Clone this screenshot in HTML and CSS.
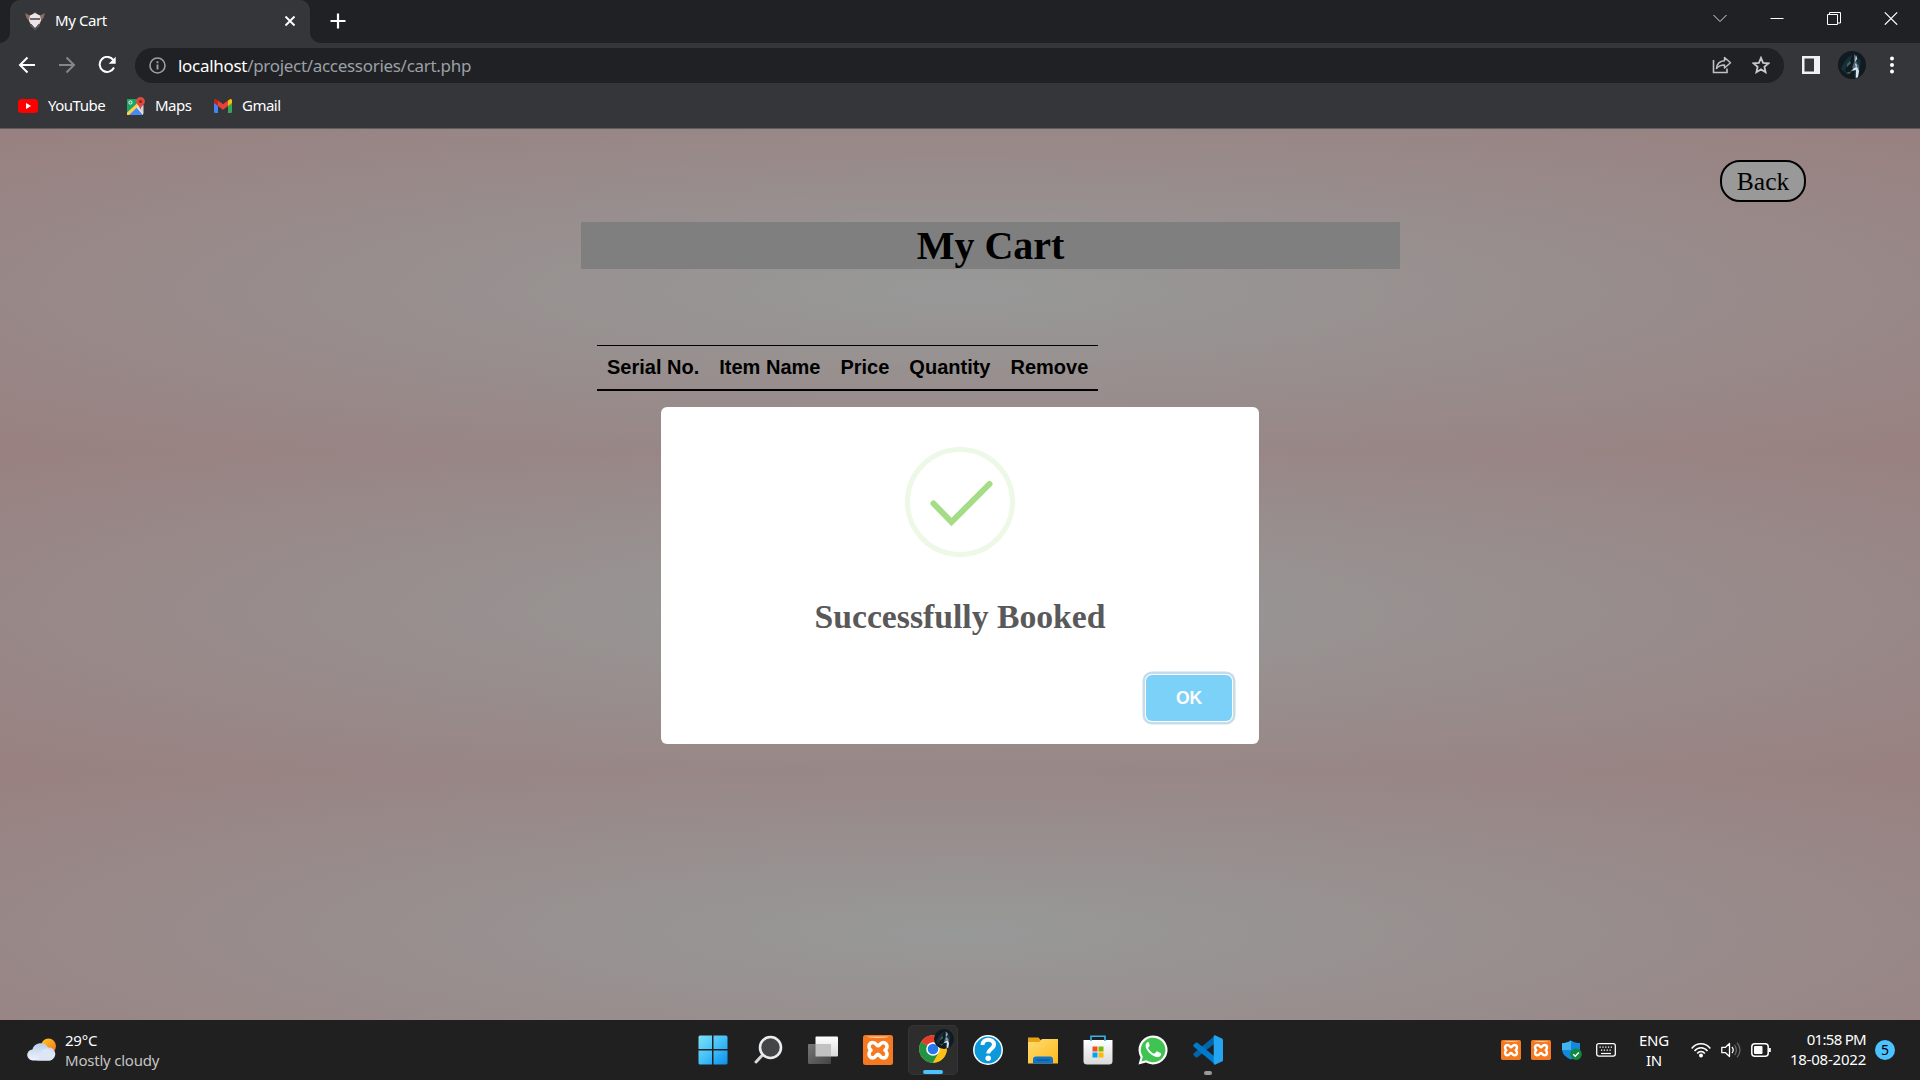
FILE: index.html
```html
<!DOCTYPE html>
<html lang="en">
<head>
<meta charset="utf-8">
<title>My Cart</title>
<link rel="stylesheet" href="styles.css">
</head>
<body>
<svg class="defs" width="0" height="0">
  <defs>
    <linearGradient id="win" x1="0" y1="0" x2="1" y2="1"><stop offset="0" stop-color="#7de1fb"/><stop offset=".5" stop-color="#43c0f7"/><stop offset="1" stop-color="#0a8ef0"/></linearGradient>
    <linearGradient id="folder" x1="0" y1="0" x2="1" y2="1"><stop offset="0" stop-color="#ffdc73"/><stop offset="1" stop-color="#fcb91c"/></linearGradient>
    <linearGradient id="bag" x1="0" y1="0" x2="0" y2="1"><stop offset="0" stop-color="#fff"/><stop offset="1" stop-color="#d9d9d9"/></linearGradient>
    <linearGradient id="cloud" x1="0" y1="0" x2="0" y2="1"><stop offset="0" stop-color="#b9cdec"/><stop offset="1" stop-color="#eef3fb"/></linearGradient>
    <linearGradient id="sun" x1="0" y1="0" x2="1" y2="1"><stop offset="0" stop-color="#ffcf1f"/><stop offset="1" stop-color="#f26b1d"/></linearGradient>
    <linearGradient id="shade" x1="0" y1="0" x2="1" y2="1"><stop offset="0" stop-color="#777"/><stop offset="1" stop-color="#444"/></linearGradient>
    <symbol id="xampp" viewBox="0 0 30 30">
      <rect width="30" height="30" rx="2.500" fill="#f47920"/><path d="M4 1.500h22c-2 2-20 2-22 0z" fill="#ffc79a"/>
      <path d="M15 10.800C13.500 10.800 13 7.500 9.800 7.500S6 10 6 11.800s1 2.400 2 3.400c-1 1-2 1.700-2 3.500S7 23 9.800 23s3.700-3.700 5.200-3.700 2 3.700 5.200 3.700 3.800-2.500 3.800-4.300-1-2.500-2-3.500c1-1 2-1.600 2-3.400s-1-4.300-3.800-4.300-3.700 3.300-5.200 3.300z" fill="none" stroke="#fff" stroke-width="3.600" stroke-linejoin="round"/>
    </symbol>
    <symbol id="avatar" viewBox="0 0 28 28">
      <circle cx="14" cy="14" r="14" fill="#101a20"/><path d="M3 18c3-7 6-12 11-14l-2 7-5 8 3 5zM18 4l5 6-2 12-5 3z" fill="#17313a"/>
      <path d="M16 3l3 3-1 4 3 5v4l-1 7-3 1 1-8-4-2 2-6z" fill="#4c6478"/><path d="M18 4l1 4-2 3zM17 12l2 2-1 3zM19 16l2 4-1 6-2 1 0-8-5 1 3-3z" fill="#d7e4ef"/><path d="M9 13l3-3 1 2-4 4zM8 22l6-2-3 3z" fill="#426656"/>
    </symbol>
  </defs>
</svg>
<header class="chrome">
  <div class="tabstrip">
    <div class="tab">
      <svg class="favicon" width="20" height="18" viewBox="0 0 20 18"><path d="M0 1l6 3 4-4 4 4 6-3-1.500 5L16 9l-2 5-4 4-4-4-2-5-2.500-3z" fill="#8d6c5c"/><path d="M5 3.500L10 1l5 2.500 1 5-2 4-4 3.500-4-3.500-2-4z" fill="#eae6e8"/><path d="M5 6h10v2H5z" fill="#6f6670"/><path d="M6 12l4 5 4-5" stroke="#453953" fill="none"/></svg>
      <span class="tab-title">My Cart</span>
      <svg class="tab-close" width="12" height="12" viewBox="0 0 12 12"><path d="M1.500 1.500l9 9m0-9l-9 9" stroke="#fff" stroke-width="1.900"/></svg>
    </div>
    <svg class="newtab" width="16" height="16" viewBox="0 0 16 16"><path d="M8 .5v15M.5 8h15" stroke="#fff" stroke-width="2.200"/></svg>
    <div class="winctl">
      <svg width="14" height="14" viewBox="0 0 14 14"><path d="M.5 4L7 10.500 13.500 4" fill="none" stroke="#ddd"/></svg>
      <svg width="14" height="14" viewBox="0 0 14 14"><path d="M.5 7.500h13" stroke="#fff"/></svg>
      <svg width="14" height="14" viewBox="0 0 14 14"><path d="M.5 3.500h10v10H.5zM2.500 3V1.500h11v10.500H11" fill="none" stroke="#fff"/></svg>
      <svg width="14" height="14" viewBox="0 0 14 14"><path d="M.8 1.300l12.400 12.400m0-12.400L.8 13.700" stroke="#fff" stroke-width="1.200"/></svg>
    </div>
  </div>
  <div class="toolbar">
    <svg class="nav" width="18" height="18" viewBox="0 0 18 18"><path d="M17 9H2m7.500-7.500L2 9l7.500 7.500" fill="none" stroke="#fff" stroke-width="2"/></svg>
    <svg class="nav" width="18" height="18" viewBox="0 0 18 18"><path d="M1 9h15M8.500 1.500L16 9l-7.500 7.500" fill="none" stroke="#85868a" stroke-width="2"/></svg>
    <svg class="nav" width="18" height="18" viewBox="0 0 18 18"><path d="M15.200 3.900A7.500 7.500 0 1 0 16 11.500" fill="none" stroke="#fff" stroke-width="2"/><path d="M17.700.700v7h-7z" fill="#fff"/></svg>
    <div class="omnibox">
      <svg width="17" height="17" viewBox="0 0 17 17"><circle cx="8.500" cy="8.500" r="7.500" fill="none" stroke="#9aa0a6" stroke-width="1.600"/><path d="M8.500 7.500v5M8.500 4.300v1.900" stroke="#9aa0a6" stroke-width="1.900"/></svg>
      <span class="url"><b>localhost</b>/project/accessories/cart.php</span>
      <svg class="share" width="20" height="18" viewBox="0 0 20 18"><path d="M1.500 4v12.500h13.500V12.500" fill="none" stroke="#c0c1c4" stroke-width="1.600"/><path d="M4.500 12.500c.5-5 3.500-7.500 8-7.700V1.500l6 5.300-6 5.200V9c-3.500 0-6 .8-8 3.500z" fill="none" stroke="#c0c1c4" stroke-width="1.500" stroke-linejoin="round"/></svg>
      <svg width="18" height="18" viewBox="0 0 18 18"><path d="M9 1.800l2.100 5 5.400.5-4.100 3.600 1.200 5.300L9 13.400l-4.600 2.800 1.200-5.300-4.100-3.600 5.400-.5z" fill="none" stroke="#c8c9cb" stroke-width="1.800"/></svg>
    </div>
    <svg class="panel" width="18" height="18" viewBox="0 0 18 18"><path fill="#f1f1f4" fill-rule="evenodd" d="M0 0h18v18H0zM2.500 2.500v13H12v-13z"/></svg>
    <svg class="user" width="28" height="28"><use href="#avatar"/></svg>
    <svg width="4" height="18" viewBox="0 0 4 18"><g fill="#fff"><circle cx="2" cy="2.500" r="2"/><circle cx="2" cy="9" r="2"/><circle cx="2" cy="15.500" r="2"/></g></svg>
  </div>
  <nav class="bookmarks">
    <a class="bm bm-yt"><svg width="20" height="14" viewBox="0 0 20 14"><rect width="20" height="14" rx="3.500" fill="#f00"/><path d="M8 4l5.200 3L8 10z" fill="#fff"/></svg><span>YouTube</span></a>
    <a class="bm bm-maps"><svg width="18" height="18" viewBox="0 0 18 18"><path d="M0 2h16v16H0z" fill="#f2f2f2"/><path d="M0 2h12L9 8l-9 9z" fill="#1ea362"/><path d="M1 18l8-8 7 8z" fill="#4a89f3"/><path d="M0 15.500L10.500 6v4L2 18H0z" fill="#ffd04b"/><path d="M10 10l6.500 7V8z" fill="#d3d6da"/><circle cx="3.500" cy="5.500" r="1.600" fill="none" stroke="#fff"/><path d="M13.500 0a4.500 4.500 0 0 1 4.400 4.500c0 3-3.400 4-4.400 8-1-4-4.400-5-4.400-8A4.500 4.500 0 0 1 13.500 0z" fill="#dd4b3e"/><circle cx="13.500" cy="4.500" r="1.600" fill="#8c2720"/></svg><span>Maps</span></a>
    <a class="bm bm-gmail"><svg width="18" height="14" viewBox="0 0 18 14"><path d="M0 3l4 3v8H1.200A1.200 1.200 0 0 1 0 12.800z" fill="#4285f4"/><path d="M14 6l4-3v9.800a1.200 1.200 0 0 1-1.200 1.200H14z" fill="#34a853"/><path d="M14 1.500L16 .2c1-.5 2 .3 2 1.400V4l-4 3z" fill="#fbbc04"/><path d="M4 1.500l5 3.800 5-3.800V7l-5 3.800L4 7z" fill="#ea4335"/><path d="M4 1.500L2 .2C1-.3 0 .5 0 1.600V4l4 3z" fill="#c5221f"/></svg><span>Gmail</span></a>
  </nav>
</header>
<main class="page">
  <a class="back">Back</a>
  <h1 class="heading">My Cart</h1>
  <table class="cart"><thead><tr><th>Serial No.</th><th>Item Name</th><th>Price</th><th>Quantity</th><th>Remove</th></tr></thead></table>
  <section class="modal">
    <svg class="success" width="110" height="110" viewBox="0 0 110 110"><circle cx="55" cy="55" r="52.500" fill="none" stroke="#edf8e6" stroke-width="5"/><path d="M28.500 56.500L46.500 75 84.500 37" fill="none" stroke="#a5dc86" stroke-width="6" stroke-linecap="round"/></svg>
    <h2 class="modal-title">Successfully Booked</h2>
    <button class="ok">OK</button>
  </section>
</main>
<footer class="taskbar">
  <div class="weather">
    <svg width="30" height="24" viewBox="0 0 30 24"><circle cx="21.500" cy="8" r="7.500" fill="url(#sun)"/><path d="M6 22.500a5.500 5.500 0 0 1-.6-11A8.500 8.500 0 0 1 21 9.500a6.500 6.500 0 0 1 1.500 13z" fill="url(#cloud)"/><path d="M14 14c3-5 9-4 10.500 0a4.700 4.700 0 0 1-2 8.500H10z" fill="#dce6f6"/></svg>
    <div class="forecast"><span>29°C</span><span class="dim">Mostly cloudy</span></div>
  </div>
  <div class="apps">
    <span class="app"><svg width="30" height="30" viewBox="0 0 30 30"><path d="M2 .5h12v13.500H.5V2A1.500 1.500 0 0 1 2 .5zM15.500.500H28A1.500 1.500 0 0 1 29.500 2v12h-14zM.5 15.500H14v14H2A1.500 1.500 0 0 1 .5 28zM15.500 15.500h14V28a1.500 1.500 0 0 1-1.500 1.500H15.500z" fill="url(#win)"/></svg></span>
    <span class="app"><svg width="30" height="30" viewBox="0 0 30 30"><path d="M9.500 20L3 27" stroke="#d5d9dc" stroke-width="3" stroke-linecap="round"/><circle cx="17.500" cy="12.500" r="10.500" fill="#454545" stroke="#e9edf0" stroke-width="2.600"/></svg></span>
    <span class="app"><svg width="30" height="30" viewBox="0 0 30 30"><rect x="7.500" y="1.500" width="22.500" height="20" rx="1" fill="url(#bag)"/><rect y="9" width="23" height="20" rx="1" fill="url(#shade)"/><path d="M7.500 9H23v12.500H7.500z" fill="#c2c2c2"/></svg></span>
    <span class="app"><svg width="30" height="30"><use href="#xampp"/></svg></span>
    <span class="app active"><svg width="36" height="36" viewBox="0 0 36 36"><circle cx="15" cy="20" r="13.800" fill="#fbc116"/><path d="M15 20L3.050 13.100A13.800 13.800 0 0 1 26.950 13.100z" fill="#e33b2e"/><path d="M15 20L3.050 13.100A13.800 13.800 0 0 0 15 33.800l6-10.500z" fill="#229342"/><path d="M15 13.500h12.200A13.800 13.800 0 0 1 15 33.800l5.800-10z" fill="#fbc116"/><circle cx="15" cy="20" r="6.800" fill="#fff"/><circle cx="15" cy="20" r="5.300" fill="#2878ed"/><use href="#avatar" x="16" y="0" width="20" height="20"/></svg></span>
    <span class="app"><svg width="30" height="30" viewBox="0 0 30 30"><circle cx="15" cy="15" r="14.200" fill="#0c98da" stroke="#fff" stroke-width="1.500"/><path d="M9.500 10c0-7 11.500-7 11.500-.5 0 4.500-5.700 4.500-5.700 9" fill="none" stroke="#fff" stroke-width="4"/><circle cx="15.200" cy="23.300" r="2.700" fill="#fff"/></svg></span>
    <span class="app"><svg width="30" height="30" viewBox="0 0 30 30"><path d="M0 2.500h10.500l3 3.500H30v6H0z" fill="#e6a213"/><path d="M0 7h11l3-3h16v24.500H0z" fill="url(#folder)"/><path d="M5 28.500v-4a3 3 0 0 1 3-3h14a3 3 0 0 1 3 3v4z" fill="#1075c8"/><path d="M8.500 25h13" stroke="#0a4c90"/></svg></span>
    <span class="app"><svg width="30" height="30" viewBox="0 0 30 30"><path d="M.5 5h29v21a3.500 3.500 0 0 1-3.500 3.500H4A3.500 3.500 0 0 1 .5 26z" fill="url(#bag)"/><path d="M8 6V1.200h14V6" fill="none" stroke="#31b5ef" stroke-width="1.600"/><path d="M9.500 11.500h5v5h-5z" fill="#f25022"/><path d="M15.500 11.500h5v5h-5z" fill="#7fba00"/><path d="M9.500 17.500h5v5h-5z" fill="#00a4ef"/><path d="M15.500 17.500h5v5h-5z" fill="#ffb900"/></svg></span>
    <span class="app"><svg width="30" height="30" viewBox="0 0 30 30"><path d="M.5 29.500l2-7.300A14.500 14.500 0 1 1 8 27.600z" fill="#fff"/><path d="M3.500 26.500l1.300-4.800A12.300 12.300 0 1 1 8.300 25.200z" fill="#3fc351"/><path d="M11 7.800c-.5-1-1.500-.9-2.300 0-1.800 2-1.300 4.600.3 7 2.300 3.500 5 6 9 7.300 2.300.6 4.700-.6 5-2.600.1-1.200 0-1.300-1-1.800l-2.500-1.200c-.7-.3-1-.2-1.500.5l-1 1.200c-.4.500-.8.500-1.500.2-2.500-1.200-4-2.800-5.200-4.900-.3-.5 0-.8.300-1.200l.9-1.200c.2-.4.200-.7 0-1.100z" fill="#fff"/></svg></span>
    <span class="app running"><svg width="30" height="30" viewBox="0 0 30 30"><path d="M22 .5v7.800L4.500 22.200c-.6.500-1.300.4-1.800 0L.8 20.500c-.7-.7-.7-1.600 0-2.200z" fill="#0065a9"/><path d="M.8 11.700c-.7-.6-.7-1.500 0-2.200L2.700 7.800c.5-.4 1.200-.5 1.800 0L22 21.700v7.800z" fill="#007acc"/><path d="M22 .3l6.900 3.100c.7.300 1.100 1 1.100 1.700v19.800c0 .7-.4 1.400-1.100 1.700L22 29.800c-.7 0-1.300-.5-1.300-1.200V1.500C20.700.8 21.300.3 22 .3z" fill="#23a5f1"/></svg></span>
  </div>
  <div class="tray">
    <svg width="20" height="20"><use href="#xampp"/></svg>
    <svg width="20" height="20"><use href="#xampp"/></svg>
    <svg class="shield" width="20" height="20" viewBox="0 0 20 20"><path d="M9 .5c3 2.200 5.500 2.500 9 2.500v6c0 5-4 8.500-9 10.500C4 17.500 0 14 0 9V3c3.500 0 6-.3 9-2.500z" fill="#1688dc"/><path d="M9 .5V10H0V3c3.500 0 6-.3 9-2.500z" fill="#41b4ef"/><circle cx="14" cy="14.200" r="5.800" fill="#10893e"/><path d="M11.200 14.200l2 2 3.600-3.800" stroke="#fff" fill="none" stroke-width="1.400"/></svg>
    <svg class="keyboard" width="20" height="14" viewBox="0 0 20 14"><rect x=".7" y=".7" width="18.600" height="12.400" rx="2" fill="none" stroke="#fff" stroke-width="1.300"/><path d="M3.500 4.200h13M5 7.200h11" stroke="#fff" stroke-width="1.300" stroke-dasharray="1.300 1.500"/><path d="M5 10.500h10" stroke="#fff" stroke-width="1.200"/></svg>
    <div class="lang"><span>ENG</span><span>IN</span></div>
    <svg class="wifi" width="20" height="16" viewBox="0 0 20 16"><g fill="none" stroke="#fff" stroke-width="1.500"><path d="M.7 6.500c5-6.200 13.600-6.200 18.600 0M3.500 9c3.500-4.500 9.500-4.500 13 0M6.200 11.500c2-2.700 5.600-2.700 7.600 0"/></g><circle cx="10" cy="13.500" r="2" fill="#fff"/></svg>
    <svg class="volume" width="20" height="16" viewBox="0 0 20 16"><path d="M.8 5.300h3.700L8.500 1.500v13L4.500 10.700H.8z" fill="none" stroke="#fff" stroke-width="1.300" stroke-linejoin="round"/><path d="M11 5c1.400 1.700 1.400 4.300 0 6" fill="none" stroke="#fff" stroke-width="1.300"/><path d="M13.500 2.800c2.500 3 2.500 7.400 0 10.400M16 .8c4 4.200 4 10.200 0 14.400" fill="none" stroke="#666" stroke-width="1.300"/></svg>
    <svg width="20" height="14" viewBox="0 0 20 14"><rect x=".8" y=".8" width="16.400" height="12.400" rx="3" fill="none" stroke="#fff" stroke-width="1.500"/><rect x="3" y="3" width="8.500" height="8" rx="1" fill="#fff"/><path d="M18.800 5v4" stroke="#fff" stroke-width="2"/></svg>
    <div class="clock"><span class="time">01:58 PM</span><span>18-08-2022</span></div>
    <span class="badge">5</span>
  </div>
</footer>
</body>
</html>
```
FILE: styles.css
```css
* { box-sizing: border-box; }
body { margin: 0; width: 1920px; height: 1080px; overflow: hidden; display: flex; flex-direction: column; font-family: "Noto Sans", sans-serif; color: #fff; }
svg { display: block; flex: none; }
.defs { position: absolute; }

.chrome { height: 129px; flex: none; background: #35363a; border-bottom: 1px solid #5d5e62; font-size: 15px; }
.tabstrip { height: 43px; background: #202124; display: flex; align-items: flex-start; padding-left: 10px; }
.tab { width: 300px; height: 43px; background: #35363a; border-radius: 10px 10px 0 0; display: flex; align-items: center; padding: 0 14px 1px 15px; position: relative; }
.tab::before, .tab::after { content: ""; position: absolute; bottom: 0; width: 10px; height: 10px; }
.tab::before { left: -10px; background: radial-gradient(circle at 0 0, #202124 9.500px, #35363a 10px); }
.tab::after { right: -10px; background: radial-gradient(circle at 100% 0, #202124 9.500px, #35363a 10px); }
.tab-title { margin-left: 10px; padding-bottom: 2px; flex: 1; letter-spacing: -.4px; }
.newtab { margin: 13px 0 0 20px; }
.winctl { margin-left: auto; padding: 11px 22px 0 0; display: flex; gap: 43px; }
.toolbar { height: 44px; padding: 0 26px 0 18px; display: flex; align-items: center; }
.nav { margin-right: 22px; }
.omnibox { width: 1650px; height: 35px; border-radius: 18px; background: #202124; display: flex; align-items: center; padding: 0 14px; margin-left: -3px; }
.url { margin-left: 12px; font-size: 17px; letter-spacing: -.3px; color: #9aa0a6; }
.url b { font-weight: 400; color: #fff; }
.share { margin: 0 20px 0 auto; }
.panel { margin-left: 18px; }
.user { margin: 0 24px 0 18px; }
.bookmarks { height: 41px; display: flex; padding: 0 18px 3px; }
.bm { display: flex; align-items: center; gap: 10px; letter-spacing: -.5px; }
.bm span { padding-bottom: 2px; }
.bm-yt { width: 109px; }
.bm-maps { width: 87px; }

.page { height: 891px; flex: none; position: relative; background: radial-gradient(ellipse at center, #979998 0%, #998080 100%) 0 1px / 1920px 320.500px repeat-y; color: #000; font-family: "Liberation Serif", serif; display: flex; flex-direction: column; padding-top: 31px; }
.back { align-self: flex-end; margin-right: 114px; width: 86px; height: 42px; border: 2px solid #000; border-radius: 20px; background: #999; font-size: 25.600px; line-height: 39px; text-align: center; }
.heading { margin: 20px 0 0 581px; width: 819px; height: 47px; background: #7f7f7f; text-align: center; font-size: 40px; line-height: 48px; }
.cart { margin: 76px 0 0 597px; width: 501px; border-collapse: collapse; font: bold 20px "Liberation Sans", sans-serif; }
.cart th { padding: 0 10px; height: 44px; border-top: 1px solid #000; border-bottom: 2px solid #000; text-align: left; white-space: nowrap; }
.modal { position: absolute; left: 661px; top: 278px; width: 598px; height: 337px; border-radius: 6px; background: #fff; display: flex; flex-direction: column; align-items: center; padding: 40px 27px 0; }
.modal-title { margin: 40px 0 0; font-size: 33.700px; line-height: 40px; color: #595959; }
.ok { align-self: flex-end; margin-top: 38px; width: 86px; height: 46px; border: 0; border-radius: 6px; background: #7cd1f9; color: #fff; font: bold 17.500px "Liberation Sans", sans-serif; box-shadow: 0 0 0 1px #fff, 0 0 0 3.500px #c7dcea; }

.taskbar { height: 60px; flex: none; background: #202020; display: grid; grid-template-columns: 680px 560px 1fr; align-items: center; font-size: 15px; line-height: 20px; }
.weather { display: flex; align-items: center; padding-left: 27px; gap: 8px; }
.forecast, .lang, .clock { display: flex; flex-direction: column; letter-spacing: -.22px; }
.dim { color: #c4c4c4; }
.apps { display: flex; padding-left: 7.500px; gap: 5px; }
.app { width: 50px; height: 50px; display: flex; align-items: center; justify-content: center; position: relative; }
.active { background: #2d2d2d; border-radius: 5px; border: 1px solid #353535; padding: 0 2px 7px 8px; }
.active::after, .running::after { content: ""; position: absolute; bottom: 0; left: 14px; width: 20px; height: 4px; border-radius: 2px; background: #4cc2ff; }
.running::after { left: 21px; width: 8px; background: #9a9a9a; }
.tray { display: flex; align-items: center; padding-left: 261px; }
.tray > svg { margin-right: 10px; }
.tray > .shield { margin: 0 14px 0 1px; }
.tray > .keyboard { margin-right: 22px; }
.lang { width: 32px; align-items: center; margin: -1px 21px 0 0; }
.clock { width: 78px; align-items: flex-end; margin: -2px 0 0 7px; }
.time { letter-spacing: -.7px; }
.badge { margin-left: 9px; width: 20px; height: 20px; border-radius: 50%; background: #4cc2ff; color: #000; text-align: center; font-size: 14px; }
```
